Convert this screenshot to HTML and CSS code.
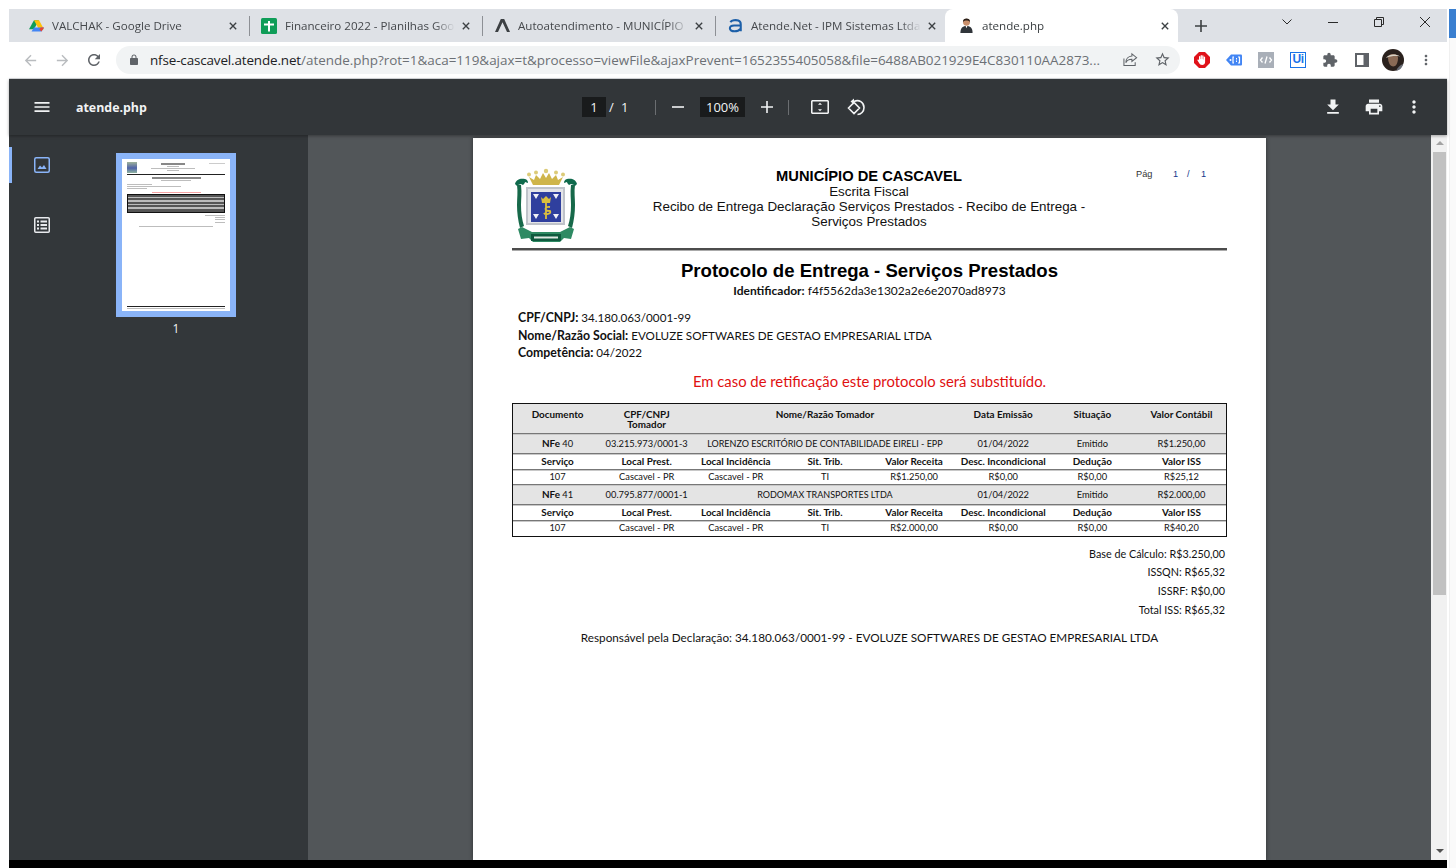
FILE: index.html
```html
<!DOCTYPE html>
<html lang="pt-BR">
<head>
<meta charset="utf-8">
<title>atende.php</title>
<link rel="stylesheet" href="styles.css">
</head>
<body>
<div class="screen">
  <div class="gutter"></div>
  <div class="window">
    <div class="tabstrip">
      <div class="tab">
        <svg class="fav" viewBox="0 0 16 16"><path fill="#0f9d58" d="M5.3 1.5h5.4L5.2 11H0z" transform="translate(0 1)"/><path fill="#ffc107" d="M10.7 2.5 16 12h-5.4L5.3 2.5z"/><path fill="#4285f4" d="M2.7 14.5 5.3 10H16l-2.7 4.5z"/><path fill="#ea4335" d="M13.3 14.5 16 10h-3.5l-1.5 2.2z"/></svg>
        <span class="tab-title">VALCHAK - Google Drive</span>
        <svg class="tab-x" viewBox="0 0 10 10"><path d="M1 1l8 8M9 1l-8 8"/></svg>
      </div>
      <div class="tab">
        <svg class="fav wide" viewBox="0 0 16 16"><rect width="16" height="16" rx="1.5" fill="#0f9d58"/><path fill="#fff" d="M3 5.500h4V3h2v2.500h4v2H9v6H7v-6H3z"/></svg>
        <span class="tab-title">Financeiro 2022 - Planilhas Goo</span>
        <svg class="tab-x" viewBox="0 0 10 10"><path d="M1 1l8 8M9 1l-8 8"/></svg>
      </div>
      <div class="tab">
        <svg class="fav" viewBox="0 0 16 16"><path fill="#3c4043" d="M6.2 1h3.6L16 15h-3.2L8 4.4 3.2 15H0z"/></svg>
        <span class="tab-title">Autoatendimento - MUNICÍPIO</span>
        <svg class="tab-x" viewBox="0 0 10 10"><path d="M1 1l8 8M9 1l-8 8"/></svg>
      </div>
      <div class="tab last">
        <svg class="fav" viewBox="0 0 16 16"><path fill="none" stroke="#1c5fa8" stroke-width="2.2" d="M2.5 4.5C4 2.5 8 1.700 11 2.700c2 .7 2.600 2 2.600 4V14M14 8H6.500C4 8 2 9 2 11s2 3.200 5 3.200c3 0 5-1 6.500-2.700"/></svg>
        <span class="tab-title">Atende.Net - IPM Sistemas Ltda</span>
        <svg class="tab-x" viewBox="0 0 10 10"><path d="M1 1l8 8M9 1l-8 8"/></svg>
      </div>
      <div class="tab active">
        <svg class="fav" viewBox="0 0 16 16"><circle cx="8" cy="4.500" r="3.700" fill="#c98f6b"/><path fill="#2b2019" d="M4.200 4.500C4 1.500 6 .5 8 .5s4 1 3.800 4C11 3 9 2.700 8 2.700S5 3 4.200 4.500z"/><path fill="#30353a" d="M1.500 16c0-5 2-7.500 6.500-7.500S14.500 11 14.500 16z"/><path fill="#fff" d="M7 8.500h2L8 11z"/></svg>
        <span class="tab-title dark">atende.php</span>
        <svg class="tab-x" viewBox="0 0 10 10"><path d="M1 1l8 8M9 1l-8 8"/></svg>
      </div>
      <svg class="newtab" viewBox="0 0 12 12"><path d="M6 0v12M0 6h12"/></svg>
      <div class="winctl">
        <svg class="chev" viewBox="0 0 10 6"><path d="M.5.5 5 5 9.500.5"/></svg>
        <svg class="min" viewBox="0 0 10 1"><path d="M0 .5h10"/></svg>
        <svg class="rest" viewBox="0 0 10 10"><path d="M.5 2.500h7v7h-7zM2.500 2.500v-2h7v7h-2"/></svg>
        <svg class="cls" viewBox="0 0 10 10"><path d="M0 0l10 10M10 0 0 10"/></svg>
      </div>
    </div>

    <div class="addrbar">
      <svg class="nav-ic back" viewBox="0 0 24 24"><path d="M20 11H7.830l5.590-5.590L12 4l-8 8 8 8 1.410-1.410L7.830 13H20v-2z"/></svg>
      <svg class="nav-ic fwd" viewBox="0 0 24 24"><path d="M4 11h12.170l-5.590-5.590L12 4l8 8-8 8-1.410-1.410L16.170 13H4v-2z"/></svg>
      <svg class="nav-ic reload" viewBox="0 0 24 24"><path d="M17.650 6.350C16.200 4.900 14.210 4 12 4c-4.420 0-7.990 3.580-7.990 8s3.570 8 7.990 8c3.730 0 6.840-2.550 7.730-6h-2.080c-.82 2.330-3.040 4-5.650 4-3.310 0-6-2.690-6-6s2.690-6 6-6c1.660 0 3.140.69 4.220 1.780L13 11h7V4l-2.350 2.350z"/></svg>
      <div class="omnibox">
        <svg class="lock" viewBox="0 0 24 24"><path d="M18 8h-1V6c0-2.760-2.240-5-5-5S7 3.240 7 6v2H6c-1.100 0-2 .9-2 2v10c0 1.100.9 2 2 2h12c1.100 0 2-.9 2-2V10c0-1.100-.9-2-2-2zM9 6c0-1.660 1.340-3 3-3s3 1.340 3 3v2H9V6z"/></svg>
        <span class="url"><span class="host">nfse-cascavel.atende.net</span>/atende.php?rot=1&amp;aca=119&amp;ajax=t&amp;processo=viewFile&amp;ajaxPrevent=1652355405058&amp;file=6488AB021929E4C830110AA2873...</span>
        <svg class="share" viewBox="0 0 16 16"><path d="M1 7v7.500h12V11M9.500 2l5 4-5 4V7.700C6 7.700 4 9 3 11.500 3 7.500 5.500 4.500 9.500 4.300z"/></svg>
        <svg class="star" viewBox="0 0 24 24"><path d="M22 9.240l-7.190-.62L12 2 9.190 8.630 2 9.240l5.460 4.730L5.820 21 12 17.270 18.180 21l-1.630-7.030L22 9.240zM12 15.400l-3.760 2.270 1-4.280-3.320-2.880 4.380-.38L12 6.100l1.710 4.040 4.380.38-3.320 2.880 1 4.280L12 15.400z"/></svg>
      </div>
      <div class="exts">
        <svg class="ext" viewBox="0 0 16 16"><path fill="#e0121a" d="M5 0h6l5 5v6l-5 5H5l-5-5V5z"/><path fill="#fff" d="M5 8V4.500a.7.7 0 0 1 1.300 0V7h.3V3.500a.7.7 0 0 1 1.300 0V7h.3V3.800a.7.7 0 0 1 1.300 0V7.500h.3V5a.7.7 0 0 1 1.300 0V10c0 2-1.300 3-3 3-1.500 0-2.500-.8-3-2L3.500 8.500c-.4-.9.7-1.500 1.200-.8z"/></svg>
        <svg class="ext" viewBox="0 0 16 16"><path fill="#4285f4" d="M5 2.500h10a1 1 0 0 1 1 1v9a1 1 0 0 1-1 1H5L0 8z"/><path fill="none" stroke="#fff" stroke-width="1.200" d="M8 5H7v6h1M12 5h1.500v6H12"/><circle cx="4.500" cy="8" r="1" fill="#fff"/><path fill="#fff" d="M10 6h1v1.500h-1zM10 8.500h1V10h-1z"/></svg>
        <svg class="ext" viewBox="0 0 16 16"><rect width="16" height="16" fill="#a9afb8"/><path fill="none" stroke="#fff" stroke-width="1.300" d="M4.500 5.500 2.500 8l2 2.500M11.500 5.500l2 2.500-2 2.500M9 4.500 7 11.500"/></svg>
        <div class="ui-ext">Ui</div>
        <svg class="ext puzzle" viewBox="0 0 24 24"><path d="M20.500 11H19V7c0-1.100-.9-2-2-2h-4V3.500C13 2.120 11.880 1 10.500 1S8 2.120 8 3.500V5H4c-1.100 0-1.990.9-1.990 2v3.800H3.500c1.490 0 2.700 1.210 2.700 2.700s-1.210 2.700-2.700 2.700H2V20c0 1.100.9 2 2 2h3.800v-1.500c0-1.490 1.210-2.700 2.700-2.700 1.490 0 2.700 1.210 2.700 2.700V22H17c1.100 0 2-.9 2-2v-4h1.500c1.380 0 2.500-1.120 2.500-2.500S21.880 11 20.500 11z"/></svg>
        <svg class="ext panel" viewBox="0 0 14 14"><path fill="#5f6368" d="M0 0h14v14H0z"/><path fill="#fff" d="M2 2h6.500v10H2z"/></svg>
        <svg class="avatar" viewBox="0 0 22 22"><circle cx="11" cy="11" r="11" fill="#2a211d"/><path fill="#8a6a55" d="M6 9c0-3 2.500-4 5-4s5 1 5 4-1 7-3 8-4.500 0-5.500-2S6 11 6 9z"/><path fill="#d9d2c6" d="M4 9c2-3.500 9-5 14-1.500-4-.8-9-.6-14 1.500z"/><path fill="#6b6f78" d="M14 22c2-4 4-6 7-7-1 4-3 6-7 7z"/></svg>
        <svg class="dots" viewBox="0 0 24 24"><path d="M12 8c1.100 0 2-.9 2-2s-.9-2-2-2-2 .9-2 2 .9 2 2 2zm0 2c-1.100 0-2 .9-2 2s.9 2 2 2 2-.9 2-2-.9-2-2-2zm0 6c-1.100 0-2 .9-2 2s.9 2 2 2 2-.9 2-2-.9-2-2-2z"/></svg>
      </div>
    </div>

    <div class="pdf">
      <header class="pdf-toolbar">
        <svg class="t-ic menu" viewBox="0 0 24 24"><path d="M3 18h18v-2H3v2zm0-5h18v-2H3v2zm0-7v2h18V6H3z"/></svg>
        <span class="pdf-title">atende.php</span>
        <span class="page-input">1</span>
        <span class="page-sep">/</span>
        <span class="page-count">1</span>
        <span class="t-sep s1"></span>
        <svg class="t-stroke zoom-out" viewBox="0 0 12 12"><path d="M0 6h12"/></svg>
        <span class="zoom-val">100%</span>
        <svg class="t-stroke zoom-in" viewBox="0 0 12 12"><path d="M6 0v12M0 6h12"/></svg>
        <span class="t-sep s2"></span>
        <svg class="t-stroke fit" viewBox="0 0 18 14"><rect x=".75" y=".75" width="16.500" height="12.500" rx="1"/><path class="fill" d="M9 2.800l2 2H7zM9 11.200l-2-2h4z"/></svg>
        <svg class="t-stroke rotate" viewBox="0 0 18 18"><path d="M1.500 10 7 4.500 12.500 10 7 15.500zM7 3.500c5-2.500 10 1 10 6 0 4-3 7-6.500 7"/><path class="fill" d="M7 .5v6L3.500 3.500z"/></svg>
        <svg class="t-ic download" viewBox="0 0 24 24"><path d="M19 9h-4V3H9v6H5l7 7 7-7zM5 18v2h14v-2H5z"/></svg>
        <svg class="t-ic print" viewBox="0 0 24 24"><path d="M19 8H5c-1.660 0-3 1.340-3 3v6h4v4h12v-4h4v-6c0-1.660-1.340-3-3-3zm-3 11H8v-5h8v5zm3-7c-.55 0-1-.45-1-1s.45-1 1-1 1 .45 1 1-.45 1-1 1zm-1-9H6v4h12V3z"/></svg>
        <svg class="t-ic more" viewBox="0 0 24 24"><path d="M12 8c1.100 0 2-.9 2-2s-.9-2-2-2-2 .9-2 2 .9 2 2 2zm0 2c-1.100 0-2 .9-2 2s.9 2 2 2 2-.9 2-2-.9-2-2-2zm0 6c-1.100 0-2 .9-2 2s.9 2 2 2 2-.9 2-2-.9-2-2-2z"/></svg>
      </header>
      <div class="pdf-body">
        <aside class="sidebar">
          <div class="side-tabs">
            <div class="side-tab on">
              <svg viewBox="0 0 16 16"><rect x=".75" y=".75" width="14.500" height="14.500" rx="1.500" fill="none" stroke="#8ab4f8" stroke-width="1.500"/><path fill="#8ab4f8" d="M3.500 12 6 8.500 8 10.500 10 8l2.500 4z"/></svg>
            </div>
            <div class="side-tab">
              <svg viewBox="0 0 16 16"><rect x=".75" y=".75" width="14.500" height="14.500" rx="1" fill="none" stroke="#e8eaed" stroke-width="1.500"/><path fill="#e8eaed" d="M3 3.500h2v2H3zM6.500 3.500H13v2H6.500zM3 7h2v2H3zM6.500 7H13v2H6.500zM3 10.500h2v2H3zM6.500 10.500H13v2H6.500z"/></svg>
            </div>
          </div>
          <div class="thumb-col">
            <div class="thumb">
              <div class="t-page">
                <div class="t-head"><span class="t-logo"></span><span class="t-lines"><i class="b w40"></i><i class="l w20"></i><i class="l w70"></i><i class="l w20"></i></span><span class="t-pag"></span></div>
                <i class="t-rule"></i>
                <i class="b w50 ctr"></i>
                <i class="l w30 ctr"></i>
                <i class="l w25 mt2"></i>
                <i class="l w55"></i>
                <i class="l w20"></i>
                <i class="r w50 ctr mt1"></i>
                <div class="t-table"><i></i><i></i><i></i><i></i></div>
                <i class="l w20 rgt mt2"></i>
                <i class="l w10 rgt"></i>
                <i class="l w10 rgt"></i>
                <i class="l w10 rgt"></i>
                <i class="l w75 ctr mt2"></i>
                <div class="t-foot"><i class="t-rule"></i><i class="l w100"></i></div>
              </div>
            </div>
            <div class="thumb-num">1</div>
          </div>
        </aside>
        <main class="viewer">
          <article class="page">
            <div class="doc-head">
              <div class="logo-col">
                <svg class="crest" viewBox="0 0 64 76">
                  <path fill="#0f6a4c" d="M1 16c1-5 6-6 10-5 2 .5 3 2 3 4l-3-1c0 1-1 2-2 3l-2-1-3 1-1 1zM63 16c-1-5-6-6-10-5-2 .5-3 2-3 4l3-1c0 1 1 2 2 3l2-1 3 1 1 1z"/>
                  <path fill="#17694a" d="M3 17h4c1 8 0 14 0 20 0 8 1 15 3 21l-4 2C4 52 3 45 3 37c0-7 1-13 0-20zM61 17h-4c-1 8 0 14 0 20 0 8-1 15-3 21l4 2c2-8 3-15 3-23 0-7-1-13 0-20z"/>
                  <path fill="#cfb54a" d="M19 17l-4-8 5 3 2-5 4 4 3-6 3 5 3-5 3 6 4-4 2 5 5-3-4 8z"/>
                  <circle cx="15" cy="6.500" r="2" fill="#dccb78"/><circle cx="22" cy="4.500" r="2" fill="#dccb78"/><circle cx="32" cy="3" r="2.200" fill="#dccb78"/><circle cx="42" cy="4.500" r="2" fill="#dccb78"/><circle cx="49" cy="6.500" r="2" fill="#dccb78"/>
                  <rect x="12" y="19" width="39" height="38" fill="#bfc3ca"/>
                  <rect x="14" y="21" width="35" height="34" fill="#e3e4e8"/>
                  <rect x="17" y="24" width="30" height="30" fill="#2f3f9e"/>
                  <path fill="#f0f0f5" d="M19 26h6l-3 5zM39 26h6l-3 5zM19 46h6l-3 5zM39 46h6l-3 5z"/>
                  <path fill="#dcbf3e" d="M27 29l2 2 3-3 3 3 2-2-1 6h-8z"/>
                  <path fill="none" stroke="#dcbf3e" stroke-width="1.800" d="M32 35v16M36 39c-6-1-6 4 0 4 2 3-5 4-6 2"/>
                  <path fill="#2e8a63" d="M4 61l4-2 10 5h28l10-5 4 2-3 10-7-1-4 4H19l-4-4-8 1z"/>
                  <path fill="#0e5a3e" d="M17 66h30v7H17z"/>
                  <path fill="#dfe8e2" d="M20 68.500h24v2H20z"/>
                </svg>
              </div>
              <div class="head-text">
                <div class="org">MUNICÍPIO DE CASCAVEL</div>
                <div>Escrita Fiscal</div>
                <div>Recibo de Entrega Declaração Serviços Prestados - Recibo de Entrega - Serviços Prestados</div>
              </div>
              <div class="pag"><span class="pag-l">Pág</span><span class="pag-n">1</span><span class="pag-n">/</span><span class="pag-n">1</span></div>
            </div>
            <div class="double-rule"></div>
            <h1 class="doc-title">Protocolo de Entrega - Serviços Prestados</h1>
            <p class="identifier"><b>Identificador:</b> f4f5562da3e1302a2e6e2070ad8973</p>
            <div class="meta">
              <div><b>CPF/CNPJ:</b> 34.180.063/0001-99</div>
              <div><b>Nome/Razão Social:</b> EVOLUZE SOFTWARES DE GESTAO EMPRESARIAL LTDA</div>
              <div><b>Competência:</b> 04/2022</div>
            </div>
            <p class="notice">Em caso de retificação este protocolo será substituído.</p>
            <div class="table">
              <div class="row head">
                <b>Documento</b><b>CPF/CNPJ<br>Tomador</b><b class="span3">Nome/Razão Tomador</b><b>Data Emissão</b><b>Situação</b><b>Valor Contábil</b>
              </div>
              <div class="row nfe">
                <span><b>NFe</b> 40</span><span>03.215.973/0001-3</span><span class="span3">LORENZO ESCRITÓRIO DE CONTABILIDADE EIRELI - EPP</span><span>01/04/2022</span><span>Emitido</span><span>R$1.250,00</span>
              </div>
              <div class="row sub">
                <b>Serviço</b><b>Local Prest.</b><b>Local Incidência</b><b>Sit. Trib.</b><b>Valor Receita</b><b>Desc. Incondicional</b><b>Dedução</b><b>Valor ISS</b>
              </div>
              <div class="row det">
                <span>107</span><span>Cascavel - PR</span><span>Cascavel - PR</span><span>TI</span><span>R$1.250,00</span><span>R$0,00</span><span>R$0,00</span><span>R$25,12</span>
              </div>
              <div class="row nfe">
                <span><b>NFe</b> 41</span><span>00.795.877/0001-1</span><span class="span3">RODOMAX TRANSPORTES LTDA</span><span>01/04/2022</span><span>Emitido</span><span>R$2.000,00</span>
              </div>
              <div class="row sub">
                <b>Serviço</b><b>Local Prest.</b><b>Local Incidência</b><b>Sit. Trib.</b><b>Valor Receita</b><b>Desc. Incondicional</b><b>Dedução</b><b>Valor ISS</b>
              </div>
              <div class="row det last">
                <span>107</span><span>Cascavel - PR</span><span>Cascavel - PR</span><span>TI</span><span>R$2.000,00</span><span>R$0,00</span><span>R$0,00</span><span>R$40,20</span>
              </div>
            </div>
            <div class="totals">
              <div>Base de Cálculo: R$3.250,00</div>
              <div>ISSQN: R$65,32</div>
              <div>ISSRF: R$0,00</div>
              <div>Total ISS: R$65,32</div>
            </div>
            <p class="resp">Responsável pela Declaração: 34.180.063/0001-99 - EVOLUZE SOFTWARES DE GESTAO EMPRESARIAL LTDA</p>
          </article>
        </main>
        <div class="scrollbar">
          <span class="arrow up"></span>
          <span class="sb-thumb"></span>
          <span class="arrow down"></span>
        </div>
      </div>
    </div>
    <div class="taskbar"></div>
  </div>
  <div class="side-window">
    <div class="sw-blue"></div>
    <div class="sw-body"></div>
  </div>
</div>
</body>
</html>
```
FILE: styles.css
```css
* { box-sizing: border-box; }
html, body { margin: 0; padding: 0; background: #fff; }
body { width: 1456px; height: 868px; overflow: hidden; }
svg { display: block; flex: none; }
.screen { display: flex; width: 1456px; height: 868px; font-family: "Open Sans", "Noto Sans", sans-serif; }
.gutter { width: 9px; flex: none; }
.window { width: 1438px; height: 859px; margin-top: 9px; display: flex; flex-direction: column; flex: none; }
.side-window { width: 9px; flex: none; margin-top: 9px; padding-left: 2px; display: flex; flex-direction: column; }
.sw-blue { height: 29px; background: #3a7fd0; }
.sw-body { flex: 1; background: #fafafa; border-left: 1px solid #f0f0f0; }

/* tabs */
.tabstrip { height: 33px; background: #dee1e6; display: flex; align-items: center; padding-left: 4px; flex: none; }
.tab { width: 233px; height: 33px; display: flex; align-items: center; padding-left: 16px; padding-right: 6px; position: relative; flex: none; }
.tab::after { content: ""; width: 1px; height: 20px; background: #8d9095; position: absolute; right: -4px; top: 7px; }
.tab.last::after, .tab.active::after { display: none; }
.fav { width: 15px; height: 15px; }
.fav.wide { width: 16px; height: 16px; margin-left: -1px; }
.tab-title { flex: 1; margin-left: 8px; font-size: 11.600px; color: #45484c; white-space: nowrap; min-width: 0; line-height: 16px; -webkit-mask-image: linear-gradient(to right, #000 88%, transparent 100%); mask-image: linear-gradient(to right, #000 88%, transparent 100%); }
.tab-title.dark { color: #3c4043; }
.tab-x { width: 8px; height: 8px; margin-left: 7px; margin-right: 3px; fill: none; stroke: #3c4043; stroke-width: 1.700; }
.tab.active { background: #fff; border-radius: 8px 8px 0 0; }
.tab.active .fav { margin-left: -2px; }
.newtab { width: 12px; height: 12px; margin-left: 17px; fill: none; stroke: #3c4043; stroke-width: 1.600; }
.winctl { margin-left: auto; display: flex; align-items: center; height: 33px; padding-bottom: 7px; }
.winctl svg { fill: none; stroke: #2a2a2a; stroke-width: 1; }
.chev { width: 10px; height: 6px; margin-right: 36px; }
.min { width: 10px; height: 1px; margin-right: 36px; }
.rest { width: 10px; height: 10px; margin-right: 36px; }
.cls { width: 10px; height: 10px; margin-right: 17px; }

/* address bar */
.addrbar { height: 37px; background: #fff; border-bottom: 1px solid #dadce0; display: flex; align-items: center; padding-left: 13px; flex: none; }
.nav-ic { width: 17px; height: 17px; fill: #b9bcbf; }
.fwd { margin-left: 15px; }
.reload { margin-left: 14px; fill: #5f6368; width: 18px; height: 18px; }
.omnibox { width: 1064px; height: 28px; margin-left: 13px; border-radius: 14px; background: #f1f3f4; display: flex; align-items: center; padding-left: 12px; margin-top: -1px; flex: none; }
.lock { width: 12px; height: 12px; fill: #5f6368; }
.url { margin-left: 10px; width: 960px; flex: none; font-size: 13.440px; color: #6c7075; white-space: nowrap; line-height: 18px; }
.host { color: #202124; letter-spacing: -.14px; }
.share { width: 15px; height: 15px; margin-left: 13px; fill: none; stroke: #5f6368; stroke-width: 1.100; }
.star { width: 17px; height: 17px; margin-left: 16px; fill: #5f6368; }
.exts { display: flex; align-items: center; margin-left: 14px; }
.ext { width: 16px; height: 16px; margin-right: 16px; }
.ui-ext { width: 16px; height: 16px; margin-right: 16px; border: 1.500px solid #1a73e8; color: #1a73e8; font: 700 12px/13px "Liberation Sans", sans-serif; text-align: center; letter-spacing: -.5px; }
.puzzle { fill: #5f6368; }
.panel { width: 14px; height: 14px; margin-right: 14px; margin-left: 1px; }
.avatar { width: 22px; height: 22px; margin-right: 14px; margin-left: -1px; }
.dots { width: 16px; height: 16px; fill: #5f6368; }

/* pdf toolbar */
.pdf { flex: 1; min-height: 0; display: flex; flex-direction: column; background: #525659; }
.pdf-toolbar { height: 56px; background: #323639; display: flex; align-items: center; padding-left: 23px; color: #f1f3f4; flex: none; position: relative; z-index: 2; box-shadow: 0 1px 3px rgba(0,0,0,.35); }
.t-ic { width: 20px; height: 20px; fill: #f1f3f4; }
.pdf-title { margin-left: 24px; width: 506px; font-size: 12.400px; font-weight: 700; color: #f1f3f4; }
.page-input { width: 24px; height: 20px; background: #191b1c; text-align: center; font-size: 13px; line-height: 20px; }
.page-sep { margin-left: 3px; width: 9px; font-size: 13px; }
.page-count { margin-left: 3px; width: 34px; font-size: 13px; }
.t-sep { width: 1px; height: 15px; background: #6b6e71; }
.t-stroke { fill: none; stroke: #f1f3f4; stroke-width: 1.600; }
.t-stroke .fill { fill: #f1f3f4; stroke: none; }
.zoom-out { width: 12px; height: 12px; margin-left: 16px; }
.zoom-val { width: 45px; height: 20px; margin-left: 16px; background: #191b1c; text-align: center; font-size: 13px; line-height: 20px; }
.zoom-in { width: 12px; height: 12px; margin-left: 16px; }
.s2 { margin-left: 15px; }
.fit { width: 18px; height: 14px; margin-left: 22px; }
.rotate { width: 18px; height: 18px; margin-left: 18px; }
.download { margin-left: 458px; }
.print { margin-left: 21px; }
.more { margin-left: 20px; }

/* body */
.pdf-body { flex: 1; min-height: 0; display: flex; }
.sidebar { width: 299px; flex: none; background: #33373a; display: flex; }
.side-tabs { width: 66px; flex: none; padding-top: 12px; }
.side-tab { height: 36px; margin-bottom: 24px; display: flex; align-items: center; padding-left: 25px; }
.side-tab svg { width: 16px; height: 16px; }
.side-tab.on { border-left: 3px solid #8ab4f8; border-radius: 0 3px 3px 0; padding-left: 22px; }
.thumb-col { padding: 18px 0 0 41px; }
.thumb { width: 120px; height: 164px; border: 6px solid #8ab4f8; background: #fff; }
.thumb-num { width: 120px; text-align: center; margin-top: 4px; font-size: 12px; line-height: 16px; color: #f1f3f4; }

/* thumbnail (blurred mini page) */
.t-page { height: 152px; padding: 3px 5px 0; display: flex; flex-direction: column; }
.t-page i { display: block; flex: none; }
.t-head { display: flex; height: 12px; gap: 5px; flex: none; }
.t-logo { width: 10px; height: 11px; background: linear-gradient(#9fb39a, #4f63a8 55%, #8fb4a0); flex: none; }
.t-lines { flex: 1; display: flex; flex-direction: column; align-items: center; padding-top: 1px; }
.t-lines i { margin-bottom: 1px; }
.t-pag { width: 16px; height: 1px; margin-top: 1px; background: #ccc; flex: none; }
.t-rule { height: 1px; background: #222; width: 100%; margin: 0 0 2px; }
.t-page .b { height: 1.500px; background: #888; margin-bottom: 1px; }
.t-page .l { height: 1px; background: #bdbdbd; margin-bottom: 1.300px; }
.t-page .r { height: 1px; background: #f5a3a3; }
.ctr { align-self: center; }
.rgt { align-self: flex-end; }
.w10 { width: 10%; } .w20 { width: 20%; } .w25 { width: 25%; } .w30 { width: 30%; } .w40 { width: 40%; } .w50 { width: 50%; } .w55 { width: 55%; } .w70 { width: 70%; } .w75 { width: 75%; } .w100 { width: 100%; }
.t-page .mt1 { margin-top: 1px; } .t-page .mt2 { margin-top: 2px; }
.t-table { height: 19px; margin-top: 1px; background: #555; border: 1px solid #111; padding-top: 2px; display: flex; flex-direction: column; gap: 2px; flex: none; }
.t-table i { height: 1.500px; background: #bcbcbc; }
.t-foot { margin-top: auto; margin-bottom: 1px; flex: none; }
.t-foot .t-rule { margin-bottom: 1px; }

/* viewer */
.viewer { flex: 1; min-width: 0; padding-top: 3px; display: flex; justify-content: center; overflow: hidden; }
.page { width: 793px; height: 722px; flex: none; background: #fff; padding: 30px 39px 0; box-shadow: 0 0 4px rgba(0,0,0,.45); color: #111; font-family: "Lato", sans-serif; }
.doc-head { display: flex; height: 80px; }
.logo-col { width: 137px; flex: none; padding-left: 2px; }
.crest { width: 64px; height: 76px; }
.head-text { width: 440px; flex: none; text-align: center; font: 13.400px/15px "Liberation Sans", Arial, sans-serif; color: #111; }
.org { font-size: 14.700px; line-height: 16px; font-weight: 700; color: #000; }
.pag { margin-left: 47px; font: 9.200px/12px "Liberation Sans", Arial, sans-serif; display: flex; height: 12px; }
.pag-l { width: 37px; color: #333; }
.pag-n { width: 14px; color: #14388a; }
.double-rule { height: 3px; border-top: 2px solid #4c4c4c; border-bottom: 1px solid #aaa; }
.doc-title { margin: 9px 0 0; font: 700 18.600px/22px "Liberation Sans", Arial, sans-serif; text-align: center; color: #000; }
.identifier { margin: 1px 0 0; font-size: 12px; line-height: 16px; text-align: center; }
.meta { margin-top: 10px; padding-left: 6px; font-size: 11.650px; line-height: 17.500px; }
.meta b { font-size: 12.300px; }
.notice { margin: 9px 0 0; font-size: 14.840px; line-height: 20px; text-align: center; color: #e01010; }
.table { margin-top: 12px; border: 1px solid #111; border-bottom: 0; font-size: 9.300px; }
.table b { font-size: 9.900px; }
.row { display: grid; grid-template-columns: repeat(8, 1fr); text-align: center; border-bottom: 1px solid #777; align-items: center; }
.row + .row { box-shadow: inset 0 1px 0 #c8c8c8; }
.row > * { white-space: nowrap; }
.span3 { grid-column: span 3; }
.nfe .span3 { font-size: 9px; }
.head { height: 30px; background: #e4e4e4; align-items: start; padding-top: 5px; line-height: 10px; }
.nfe { height: 20px; background: #e4e4e4; }
.sub { height: 16px; }
.det { height: 15px; }
.det.last { border-bottom: 1px solid #111; height: 16px; padding-bottom: 1px; }
.totals { margin-top: 8px; padding-right: 2px; text-align: right; font-size: 10.800px; line-height: 18.700px; }
.resp { margin: 9px 0 0; font-size: 11.720px; line-height: 18px; text-align: center; }

/* scrollbar */
.scrollbar { width: 16px; flex: none; background: #f1f1f1; padding: 6px 1px 0 2px; display: flex; flex-direction: column; align-items: center; }
.sb-thumb { width: 13px; height: 443px; background: #c1c1c1; margin-top: 7px; }
.arrow { width: 0; height: 0; border-left: 4px solid transparent; border-right: 4px solid transparent; }
.arrow.up { border-bottom: 4px solid #a3a3a3; }
.arrow.down { border-top: 4px solid #505050; margin-top: auto; margin-bottom: 7px; }

.taskbar { height: 8px; background: #000; flex: none; }
```
